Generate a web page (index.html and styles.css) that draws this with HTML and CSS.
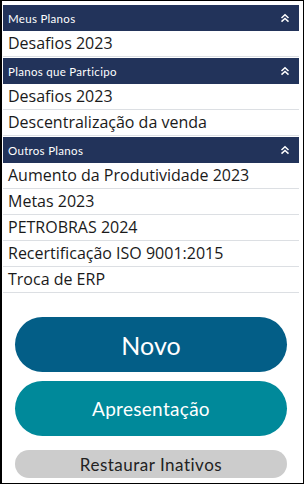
FILE: index.html
```html
<!DOCTYPE html>
<html lang="pt-BR">
<head>
  <meta charset="UTF-8" />
  <meta name="viewport" content="width=device-width, initial-scale=1" />
  <title>Planos</title>
  <link rel="stylesheet" href="styles.css">
</head>
<body>
  <div class="frame">

    <!-- MEUS PLANOS -->
    <section class="group">
      <div class="group-head">
        <span>Meus Planos</span>
        <svg class="chev" viewBox="0 0 10 10" width="10" height="10"><path d="M1.5 5 L5 1.8 L8.5 5 M1.5 8.6 L5 5.4 L8.5 8.6" fill="none" stroke="#fff" stroke-width="1.5"/></svg>
      </div>
      <ul class="plans">
        <li>Desafios 2023</li>
      </ul>
    </section>

    <!-- PLANOS QUE PARTICIPO -->
    <section class="group">
      <div class="group-head">
        <span>Planos que Participo</span>
        <svg class="chev" viewBox="0 0 10 10" width="10" height="10"><path d="M1.5 5 L5 1.8 L8.5 5 M1.5 8.6 L5 5.4 L8.5 8.6" fill="none" stroke="#fff" stroke-width="1.5"/></svg>
      </div>
      <ul class="plans">
        <li>Desafios 2023</li>
        <li>Descentralização da venda</li>
      </ul>
    </section>

    <!-- OUTROS PLANOS -->
    <section class="group">
      <div class="group-head">
        <span>Outros Planos</span>
        <svg class="chev" viewBox="0 0 10 10" width="10" height="10"><path d="M1.5 5 L5 1.8 L8.5 5 M1.5 8.6 L5 5.4 L8.5 8.6" fill="none" stroke="#fff" stroke-width="1.5"/></svg>
      </div>
      <ul class="plans">
        <li>Aumento da Produtividade 2023</li>
        <li>Metas 2023</li>
        <li>PETROBRAS 2024</li>
        <li>Recertificação ISO 9001:2015</li>
        <li>Troca de ERP</li>
      </ul>
    </section>

    <div class="actions">
      <button class="btn btn-new">Novo</button>
      <button class="btn btn-show">Apresentação</button>
      <button class="btn btn-restore">Restaurar Inativos</button>
    </div>

  </div>
</body>
</html>
```

FILE: styles.css
```css
/* Reset */
* {
  box-sizing: border-box;
  margin: 0;
  padding: 0;
}

body {
  background: #fff;
  font-family: 'Open Sans', 'Liberation Sans', sans-serif;
  color: #1a1a1a;
}

.frame {
  width: 304px;
  height: 484px;
  border: 1px solid #000;
  border-left-width: 2px;
  padding: 4px 4px 0 1px;
  display: flex;
  flex-direction: column;
  gap: 1px;
  overflow: hidden;
}

/* Group header bar */
.group-head {
  background-color: #22335a;
  color: #fff;
  height: 26px;
  display: flex;
  align-items: center;
  justify-content: space-between;
  padding: 0 9px 0 5px;
  font-family: 'Lato', 'DejaVu Sans', sans-serif;
  font-size: 11.5px;
  letter-spacing: 0.3px;
}

.chev {
  display: block;
}

/* Plan rows */
ul.plans {
  list-style: none;
}

ul.plans li {
  height: 26px;
  line-height: 25px;
  padding-left: 5px;
  font-size: 16px;
  border-bottom: 1px solid #dcdfe3;
  white-space: nowrap;
}

/* Buttons */
.actions {
  display: flex;
  flex-direction: column;
  align-items: center;
  margin-top: 23px;
}

.btn {
  width: 272px;
  border: none;
  border-radius: 30px;
  color: #fff;
  font-family: 'Lato', 'DejaVu Sans', sans-serif;
  cursor: pointer;
}

.btn-new {
  height: 55px;
  background-color: #035e87;
  font-size: 25px;
}

.btn-show {
  height: 55px;
  margin-top: 9px;
  background-color: #00899a;
  font-size: 19px;
  letter-spacing: 0.3px;
}

.btn-restore {
  height: 28px;
  margin-top: 14px;
  background-color: #cccccc;
  color: #222;
  font-size: 17px;
  letter-spacing: 0.5px;
}
```
